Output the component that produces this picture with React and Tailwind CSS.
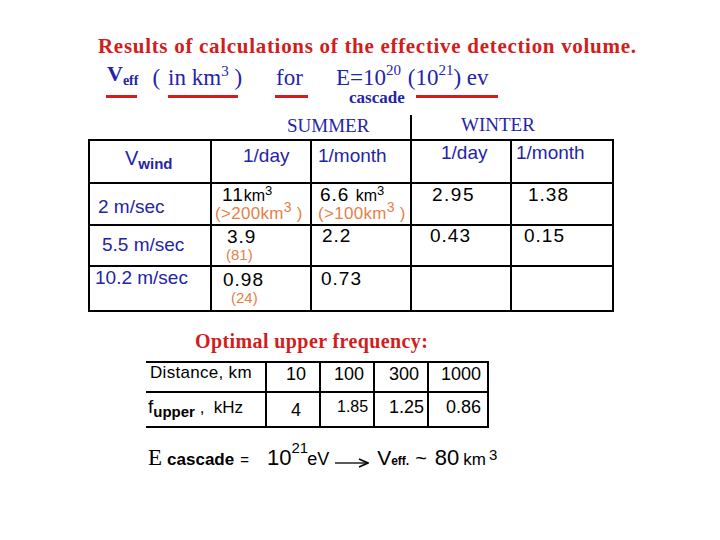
import React from 'react';

const serif = "font-['Liberation_Serif','Times_New_Roman',serif]";

function Cell({ className = '', children }) {
  return <div className={`border-r-2 border-b-2 border-black ${className}`}>{children}</div>;
}

export default function App() {
  return (
    <div className="w-[720px] h-[540px] bg-white flex flex-col overflow-hidden font-['Liberation_Sans',Arial,sans-serif] text-black">
      {/* title */}
      <div className={`${serif} pl-[98px] pt-[35px] text-[21px] leading-[23px] tracking-[0.7px] font-bold text-[#d21d1d] whitespace-nowrap`}>
        Results of calculations of the effective detection volume.
      </div>

      {/* V_eff line */}
      <div className={`${serif} flex items-start mt-[6px] text-[#2424a8] text-[23px] leading-[28px]`}>
        <div className="ml-[106px] flex flex-col">
          <div className="h-[28px] pl-[1px] whitespace-nowrap">
            <span className="font-bold text-[22px] leading-[0px] align-[4px]">V</span>
            <span className="font-bold text-[14px] leading-[0px]">eff</span>
          </div>
          <div className="mt-[3px] w-[31px] h-[3px] bg-[#d21d1d]" />
        </div>
        <div className="ml-[14px] h-[28px]">(</div>
        <div className="ml-[8px] flex flex-col">
          <div className="h-[28px] whitespace-nowrap">
            in km<span className="text-[15px] leading-[0px] align-[9px]">3</span> )
          </div>
          <div className="mt-[3px] w-[70px] h-[3px] bg-[#d21d1d]" />
        </div>
        <div className="ml-[33px] flex flex-col">
          <div className="h-[28px] pl-[1px]">for</div>
          <div className="mt-[3px] w-[33px] h-[3px] bg-[#d21d1d]" />
        </div>
        <div className="ml-[28px] flex flex-col">
          <div className="h-[28px] whitespace-nowrap">
            E=10<span className="text-[15px] leading-[0px] align-[10px]">20</span>
          </div>
          <div className="ml-[13px] mt-[-3px] text-[17px] leading-[17px] font-bold">cascade</div>
        </div>
        <div className="ml-[3px] flex flex-col">
          <div className="h-[28px] whitespace-nowrap">
            (10<span className="text-[15px] leading-[0px] align-[10px]">21</span>) ev
          </div>
          <div className="ml-[8px] mt-[3px] w-[82px] h-[3px] bg-[#d21d1d]" />
        </div>
      </div>

      {/* season labels */}
      <div className={`${serif} ml-[88px] mt-[9px] w-[526px] h-[24px] flex text-[19px] leading-[20px] text-[#2424a8]`}>
        <div className="w-[322px] pl-[199px] pt-[1px]">SUMMER</div>
        <div className="w-[2px] h-full bg-black" />
        <div className="pl-[49px]">WINTER</div>
      </div>

      {/* main table */}
      <div className="ml-[88px] w-[526px] grid grid-cols-[122px_100px_100px_100px_102px] grid-rows-[43px_42px_41px_45px] border-t-2 border-l-2 border-black text-[19px] leading-[20px]">
        <Cell className="pl-[35px] pt-[8px] text-[#2424a8]">
          <span className="text-[20px] leading-[0px]">V</span>
          <span className="text-[15px] leading-[0px] font-bold align-[-4px]">wind</span>
        </Cell>
        <Cell className="pl-[31px] pt-[5px] text-[#2424a8]">1/day</Cell>
        <Cell className="pl-[6px] pt-[5px] text-[#2424a8]">1/month</Cell>
        <Cell className="pl-[29px] pt-[2px] text-[#2424a8]">1/day</Cell>
        <Cell className="pl-[4px] pt-[2px] text-[#2424a8]">1/month</Cell>

        <Cell className="pl-[8px] pt-[12px] text-[19px] leading-[22px] text-[#2424a8]">2 m/sec</Cell>
        <Cell className="pt-[1px]">
          <div className="h-[20px] pl-[10px] tracking-[1px] whitespace-nowrap">
            11<span className="text-[16px] leading-[0px] tracking-normal">km<span className="text-[13px] leading-[0px] align-[6px]">3</span></span>
          </div>
          <div className="h-[17px] pl-[3px] text-[17px] leading-[17px] tracking-[0.3px] text-[#e8804a] whitespace-nowrap">
            (&gt;200km<span className="text-[14px] leading-[0px] align-[7px]">3</span> )
          </div>
        </Cell>
        <Cell className="pt-[1px]">
          <div className="h-[20px] pl-[8px] tracking-[1px] whitespace-nowrap">
            6.6 <span className="text-[16px] leading-[0px] tracking-normal">km<span className="text-[13px] leading-[0px] align-[6px]">3</span></span>
          </div>
          <div className="h-[17px] pl-[6px] text-[17px] leading-[17px] tracking-[0.3px] text-[#e8804a] whitespace-nowrap">
            (&gt;100km<span className="text-[14px] leading-[0px] align-[7px]">3</span> )
          </div>
        </Cell>
        <Cell className="pl-[20px] pt-[1px] tracking-[1.5px]">2.95</Cell>
        <Cell className="pl-[16px] pt-[1px] tracking-[1px]">1.38</Cell>

        <Cell className="pl-[12px] pt-[8px] text-[19px] leading-[22px] text-[#2424a8]">5.5 m/sec</Cell>
        <Cell className="pt-[2px]">
          <div className="h-[18px] pl-[15px] leading-[18px] tracking-[1px]">3.9</div>
          <div className="mt-[1px] pl-[14px] text-[15px] leading-[16px] text-[#e8804a]">(81)</div>
        </Cell>
        <Cell className="pl-[10px] pt-[0px] tracking-[1px]">2.2</Cell>
        <Cell className="pl-[18px] pt-[0px] tracking-[1px]">0.43</Cell>
        <Cell className="pl-[12px] pt-[0px] tracking-[1px]">0.15</Cell>

        <Cell className="pl-[5px] pt-[0px] text-[19px] leading-[21px] text-[#2424a8] whitespace-nowrap">10.2 m/sec</Cell>
        <Cell className="pt-[4px]">
          <div className="h-[18px] pl-[11px] leading-[18px] tracking-[1px]">0.98</div>
          <div className="mt-[1px] pl-[19px] text-[15px] leading-[16px] text-[#e8804a]">(24)</div>
        </Cell>
        <Cell className="pl-[9px] pt-[2px] tracking-[1px]">0.73</Cell>
        <Cell />
        <Cell />
      </div>

      {/* optimal frequency */}
      <div className={`${serif} ml-[195px] mt-[18px] text-[20px] leading-[22px] tracking-[0.4px] font-bold text-[#d21d1d]`}>
        Optimal upper frequency:
      </div>

      <div className="ml-[146px] mt-[9px] w-[343px] grid grid-cols-[121px_54px_54px_54px_60px] grid-rows-[30px_35px] border-t-2 border-black text-[18px] leading-[20px]">
        <Cell className="pl-[4px] pt-[0px] text-[17px] tracking-[0.3px]">Distance, km</Cell>
        <Cell className="pl-[19px] pt-[1px]">10</Cell>
        <Cell className="pl-[13px] pt-[1px]">100</Cell>
        <Cell className="pl-[14px] pt-[1px]">300</Cell>
        <Cell className="pl-[12px] pt-[1px]">1000</Cell>

        <Cell className="pl-[2px] pt-[4px] whitespace-nowrap">
          <span className="text-[19px] leading-[0px]">f</span>
          <span className="text-[15px] leading-[0px] font-bold align-[-4px]">upper</span>
          <span className="text-[17px] leading-[0px]"> ,&nbsp; kHz</span>
        </Cell>
        <Cell className="pl-[24px] pt-[7px]">4</Cell>
        <Cell className="pl-[16px] pt-[4px] text-[16px]">1.85</Cell>
        <Cell className="pl-[14px] pt-[4px]">1.25</Cell>
        <Cell className="pl-[17px] pt-[4px]">0.86</Cell>
      </div>

      {/* formula */}
      <div className="ml-[148px] mt-[16px] flex items-baseline whitespace-nowrap leading-[28px]">
        <span className={`${serif} text-[23px]`}>E</span>
        <span className="ml-[5px] text-[17px] font-bold align-[-4px]">cascade</span>
        <span className="ml-[6px] text-[15px]">=</span>
        <span className="ml-[18px] text-[22px]">10</span>
        <span className="text-[15px] leading-[15px] self-start mt-[-4px]">21</span>
        <span className="ml-[-1px] text-[18px]">eV</span>
        <svg className="ml-[6px] self-center mt-[6px]" width="34" height="10" viewBox="0 0 34 10">
          <line x1="0" y1="5" x2="32" y2="5" stroke="#000" strokeWidth="1.3" />
          <path d="M24 1 L33 5 L24 9" fill="none" stroke="#000" strokeWidth="1.5" />
        </svg>
        <span className="ml-[8px] text-[21px]">V</span>
        <span className="text-[12px] font-bold align-[-3px]">eff.</span>
        <span className="ml-[6px] text-[20px]">~</span>
        <span className="ml-[8px] text-[22px]">80</span>
        <span className="ml-[4px] text-[17px]">km</span>
        <span className="ml-[3px] text-[15px] self-start mt-[-3px]">3</span>
      </div>
    </div>
  );
}
